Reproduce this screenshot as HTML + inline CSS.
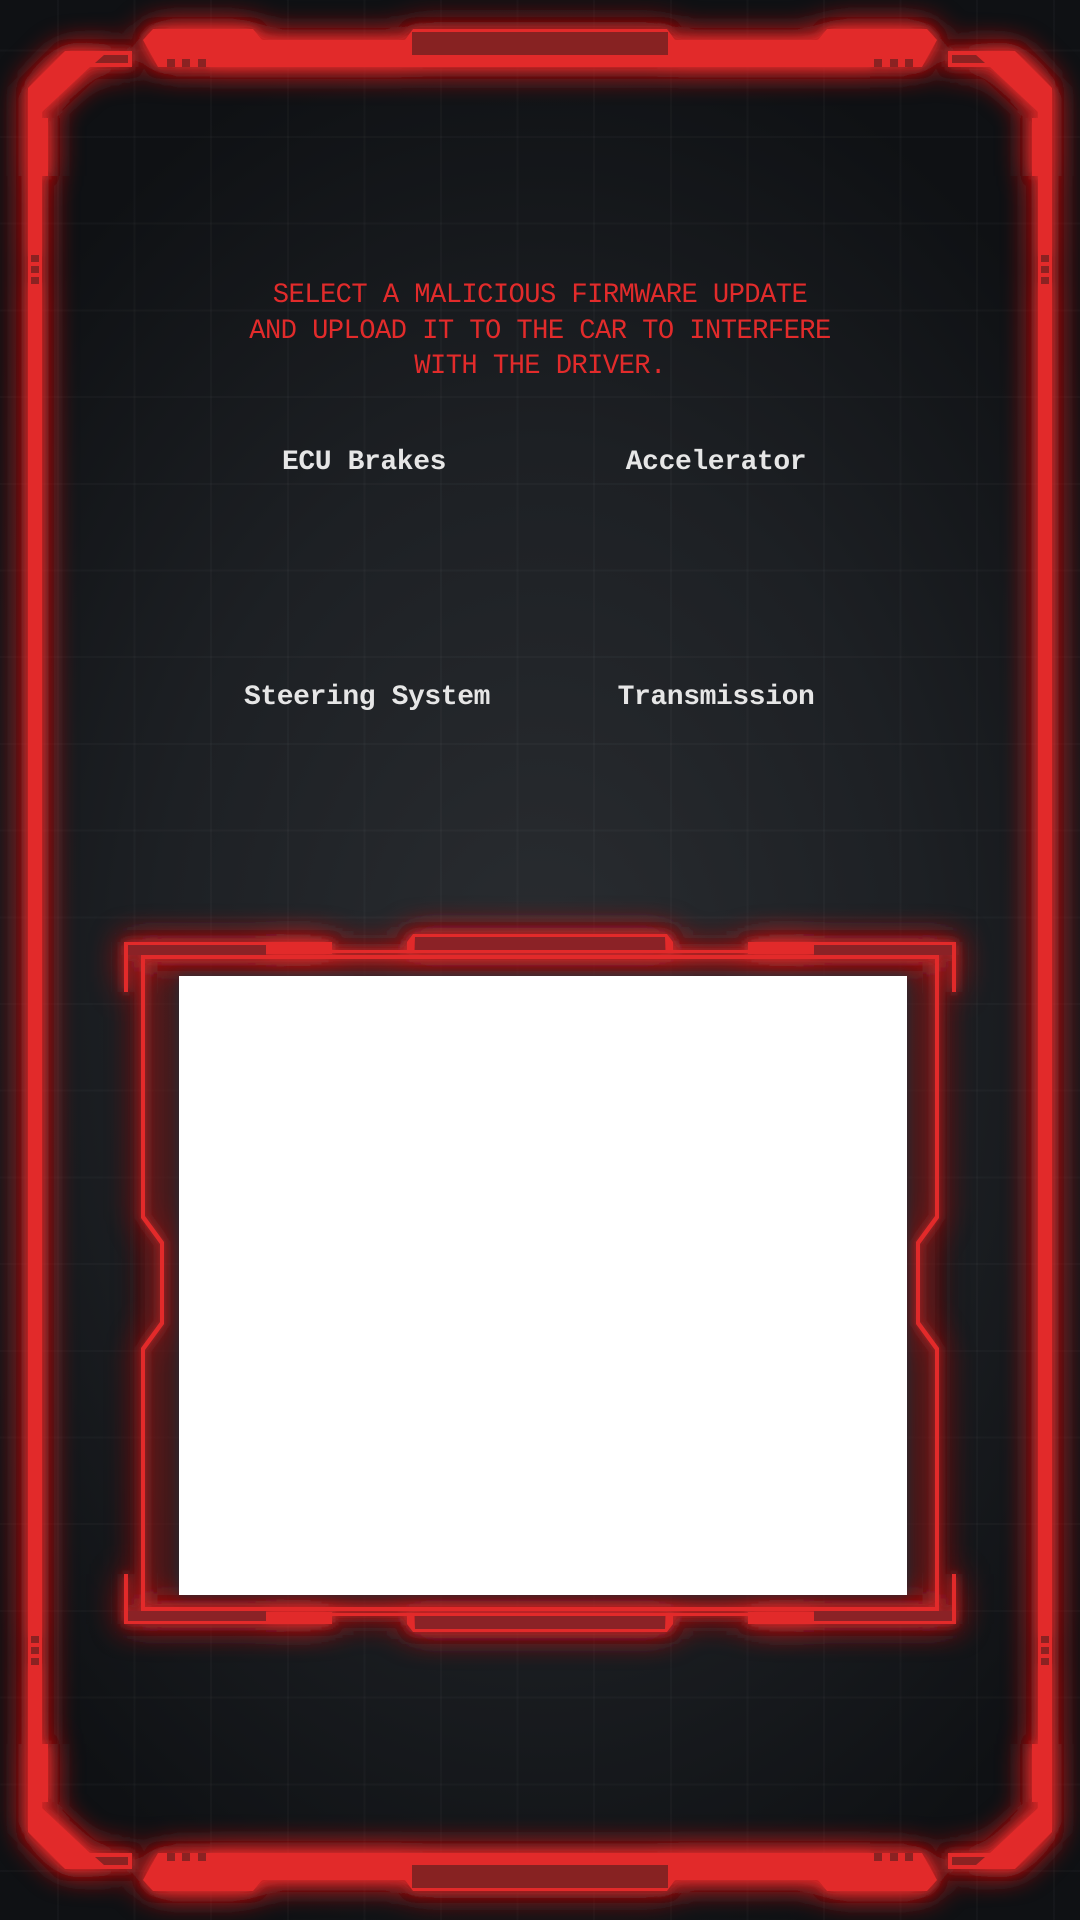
<!DOCTYPE html>
<html><head><meta charset="utf-8"><style>
html,body{margin:0;padding:0;width:1080px;height:1920px;overflow:hidden;background:#0e1013}
body{position:relative;font-family:"Liberation Mono",monospace;
background:
 repeating-linear-gradient(90deg,transparent 0 57px,rgba(255,255,255,.025) 57px 59px,transparent 59px 76.6px),
 repeating-linear-gradient(0deg,transparent 0 48px,rgba(255,255,255,.025) 48px 50px,transparent 50px 86.7px),
 radial-gradient(ellipse 700px 1000px at 540px 1000px,#2a2d31 0%,#1d2024 55%,#0f1114 100%);}
.t{position:absolute;left:0;width:1080px;text-align:center;color:#e22b2b;font-size:28px;letter-spacing:-0.6px;line-height:35.5px;top:278px;transform:scaleX(0.97)}
.l{position:absolute;color:#e6e6e6;font-weight:bold;font-size:28px;letter-spacing:-0.4px;transform:translateX(-50%);white-space:nowrap}
svg{position:absolute;left:0;top:0}
.w{position:absolute;left:179px;top:976px;width:728px;height:619px;background:#fff;box-shadow:0 0 10px rgba(30,50,60,.8)}
</style></head><body>
<svg width="1080" height="1920" viewBox="0 0 1080 1920">
<defs>
<filter id="g" x="-20%" y="-20%" width="140%" height="140%"><feGaussianBlur stdDeviation="16" result="b"/><feGaussianBlur in="SourceGraphic" stdDeviation="5" result="c"/><feMerge><feMergeNode in="b"/><feMergeNode in="b"/><feMergeNode in="c"/><feMergeNode in="SourceGraphic"/></feMerge></filter>
<g id="q">
 <polygon points="28,88 65,51 132,51 132,67 90,67 42,112 42,960 28,960" fill="#e22b2b"/>
 <polygon points="95,63 104,55 128,55 128,63" fill="#8b2024"/>
 <rect x="42" y="118" width="6" height="58" fill="#e22b2b"/>
 <rect x="31" y="255" width="8" height="7" fill="#8b2024"/><rect x="31" y="266" width="8" height="7" fill="#8b2024"/><rect x="31" y="277" width="8" height="7" fill="#8b2024"/>
 <polygon points="143,40 153,29 253,29 262,40 405,40 405,67 158,67" fill="#e22b2b"/>
 <rect x="167" y="59" width="8" height="8" fill="#8b2024"/><rect x="182" y="59" width="8" height="8" fill="#8b2024"/><rect x="198" y="59" width="8" height="8" fill="#8b2024"/>
 <polygon points="405,40 413,29 540,29 540,62 405,62" fill="#e22b2b"/>
 <rect x="412" y="32" width="128" height="23" fill="#872024"/>
 <polygon points="325,67 330,62 540,62 540,67" fill="#e22b2b"/>
</g>
<g id="r">
 <polygon points="124,942 266,942 266,945 128,945 128,992 124,992" fill="#e22b2b"/>
 <rect x="128" y="945" width="138" height="10" fill="#8b2226"/>
 <rect x="266" y="942" width="66" height="12" fill="#e22b2b"/>
 <rect x="332" y="950" width="75" height="3" fill="#e22b2b"/>
 <polygon points="407,942 413,934 540,934 540,937 415,937 414,950 540,950 540,953 407,953" fill="#e22b2b"/>
 <rect x="415" y="937" width="125" height="13" fill="#8b2226"/>
 <polygon points="141,955 540,955 540,959 145,959 145,1216 164,1242 164,1283 160,1283 160,1244 141,1218" fill="#e22b2b"/>
</g>
</defs>
<rect x="145" y="959" width="790" height="648" fill="#5a1a1d" opacity="0.55" filter="url(#g)"/>
<g filter="url(#g)">
 <use href="#q"/>
 <use href="#q" transform="translate(1080,0) scale(-1,1)"/>
 <use href="#q" transform="translate(0,1920) scale(1,-1)"/>
 <use href="#q" transform="translate(1080,1920) scale(-1,-1)"/>
 <use href="#r"/>
 <use href="#r" transform="translate(1080,0) scale(-1,1)"/>
 <use href="#r" transform="translate(0,2566) scale(1,-1)"/>
 <use href="#r" transform="translate(1080,2566) scale(-1,-1)"/>
</g>
</svg>
<div class="w"></div>
<div class="t">SELECT A MALICIOUS FIRMWARE UPDATE<br>AND UPLOAD IT TO THE CAR TO INTERFERE<br>WITH THE DRIVER.</div>
<div class="l" style="left:364px;top:447px">ECU Brakes</div>
<div class="l" style="left:716px;top:447px">Accelerator</div>
<div class="l" style="left:367px;top:682px">Steering System</div>
<div class="l" style="left:716px;top:682px">Transmission</div>
</body></html>
